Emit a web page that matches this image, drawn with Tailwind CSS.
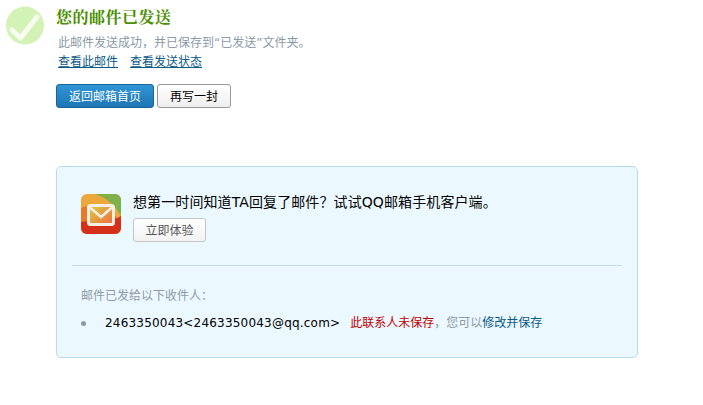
<!DOCTYPE html>
<html lang="zh-CN">
<head>
    <meta charset="UTF-8">
    <title>邮件已发送</title>
    <script src="https://cdn.jsdelivr.net/npm/@tailwindcss/browser@4"></script>
</head>
<body class="bg-white font-['DejaVu_Sans','Noto_Sans_CJK_SC',sans-serif] text-xs text-black w-[703px] h-[405px] overflow-hidden">
<div class="pt-[6px] pl-[6px] flex gap-[12px]">
    <svg width="38" height="39" viewBox="0 0 38 39" class="shrink-0">
        <circle cx="19" cy="19.5" r="19" fill="#d3f3b6"/>
        <path d="M6 24 L14.5 32 L31 11" fill="none" stroke="#f6fdf0" stroke-width="5" stroke-linecap="round" stroke-linejoin="round"/>
    </svg>
    <div>
        <h1 class="text-base font-bold text-[#4b8f00] h-[22px] leading-[22px] tracking-[0.5px] font-['Noto_Serif_CJK_SC','Noto_Sans_CJK_SC',serif]">您的邮件已发送</h1>
        <p class="mt-[6px] pl-[2px] h-[18px] leading-[18px] text-[#8a9aa8]">此邮件发送成功，并已保存到“已发送”文件夹。</p>
        <div class="mt-[1px] pl-[2px] flex gap-[12px] h-[18px] leading-[18px] text-[#0a5a86]">
            <a class="underline">查看此邮件</a>
            <a class="underline">查看发送状态</a>
        </div>
        <div class="mt-[13px] flex gap-[3px]">
            <button class="w-[98px] h-[24px] pt-[2px] rounded-[3px] border border-[#1a6496] bg-gradient-to-b from-[#2f95d6] to-[#1f76b4] text-white">返回邮箱首页</button>
            <button class="w-[74px] h-[24px] pt-[2px] rounded-[3px] border border-[#999] bg-gradient-to-b from-white to-[#eeeeee] text-black">再写一封</button>
        </div>
    </div>
</div>

<div class="mt-[58px] ml-[56px] w-[582px] h-[192px] rounded-[5px] border border-[#b5dcec] bg-[#ebf8ff] px-[15px]">
    <div class="pt-[27px] pl-[9px] flex gap-[12px] h-[99px] border-b border-[#c8dbe4]">
        <svg width="40" height="40" viewBox="0 0 40 40" class="shrink-0">
            <defs>
                <clipPath id="box"><rect width="40" height="40" rx="6"/></clipPath>
                <linearGradient id="env" x1="0" y1="0" x2="1" y2="1">
                    <stop offset="0" stop-color="#d8d040"/>
                    <stop offset="1" stop-color="#f06a40"/>
                </linearGradient>
            </defs>
            <g clip-path="url(#box)">
                <rect width="40" height="40" fill="#eca83a"/>
                <path d="M14 0 H40 V22 C34 11 26 4 14 0Z" fill="#7fb04a"/>
                <path d="M0 14 C12 8 30 14 40 28 V40 H0Z" fill="#ec7a24"/>
                <path d="M0 28 C12 25 28 30 40 22 V40 H0Z" fill="#d4301a"/>
            </g>
            <rect x="7.5" y="11.5" width="25" height="19" rx="2" fill="url(#env)" stroke="#f6efe6" stroke-width="3"/>
            <path d="M9 13.5 L20 23 L31 13.5" fill="none" stroke="#f6efe6" stroke-width="2.5"/>
        </svg>
        <div>
            <p class="text-sm tracking-[0.1px] h-[16px] leading-[16px]">想第一时间知道TA回复了邮件？试试QQ邮箱手机客户端。</p>
            <button class="mt-[8px] w-[73px] h-[24px] pt-[1px] rounded-[3px] border border-[#c4c4c4] bg-gradient-to-b from-white to-[#f2f2f2] text-[#555]">立即体验</button>
        </div>
    </div>
    <p class="mt-[21px] pl-[9px] h-[18px] leading-[18px] text-[#8f9aa3]">邮件已发给以下收件人：</p>
    <div class="mt-[9px] pl-[9px] flex items-center h-[18px] leading-[18px]">
        <span class="w-[5px] h-[5px] rounded-full bg-[#8a9aa8]"></span>
        <span class="ml-[19px] tracking-[0.2px] text-black">2463350043&lt;2463350043@qq.com&gt;</span>
        <span class="ml-[10px] text-[#c00000]">此联系人未保存</span>
        <span class="text-[#8f9aa3]">，您可以</span>
        <a class="text-[#0a5a86]">修改并保存</a>
    </div>
</div>
</body>
</html>
